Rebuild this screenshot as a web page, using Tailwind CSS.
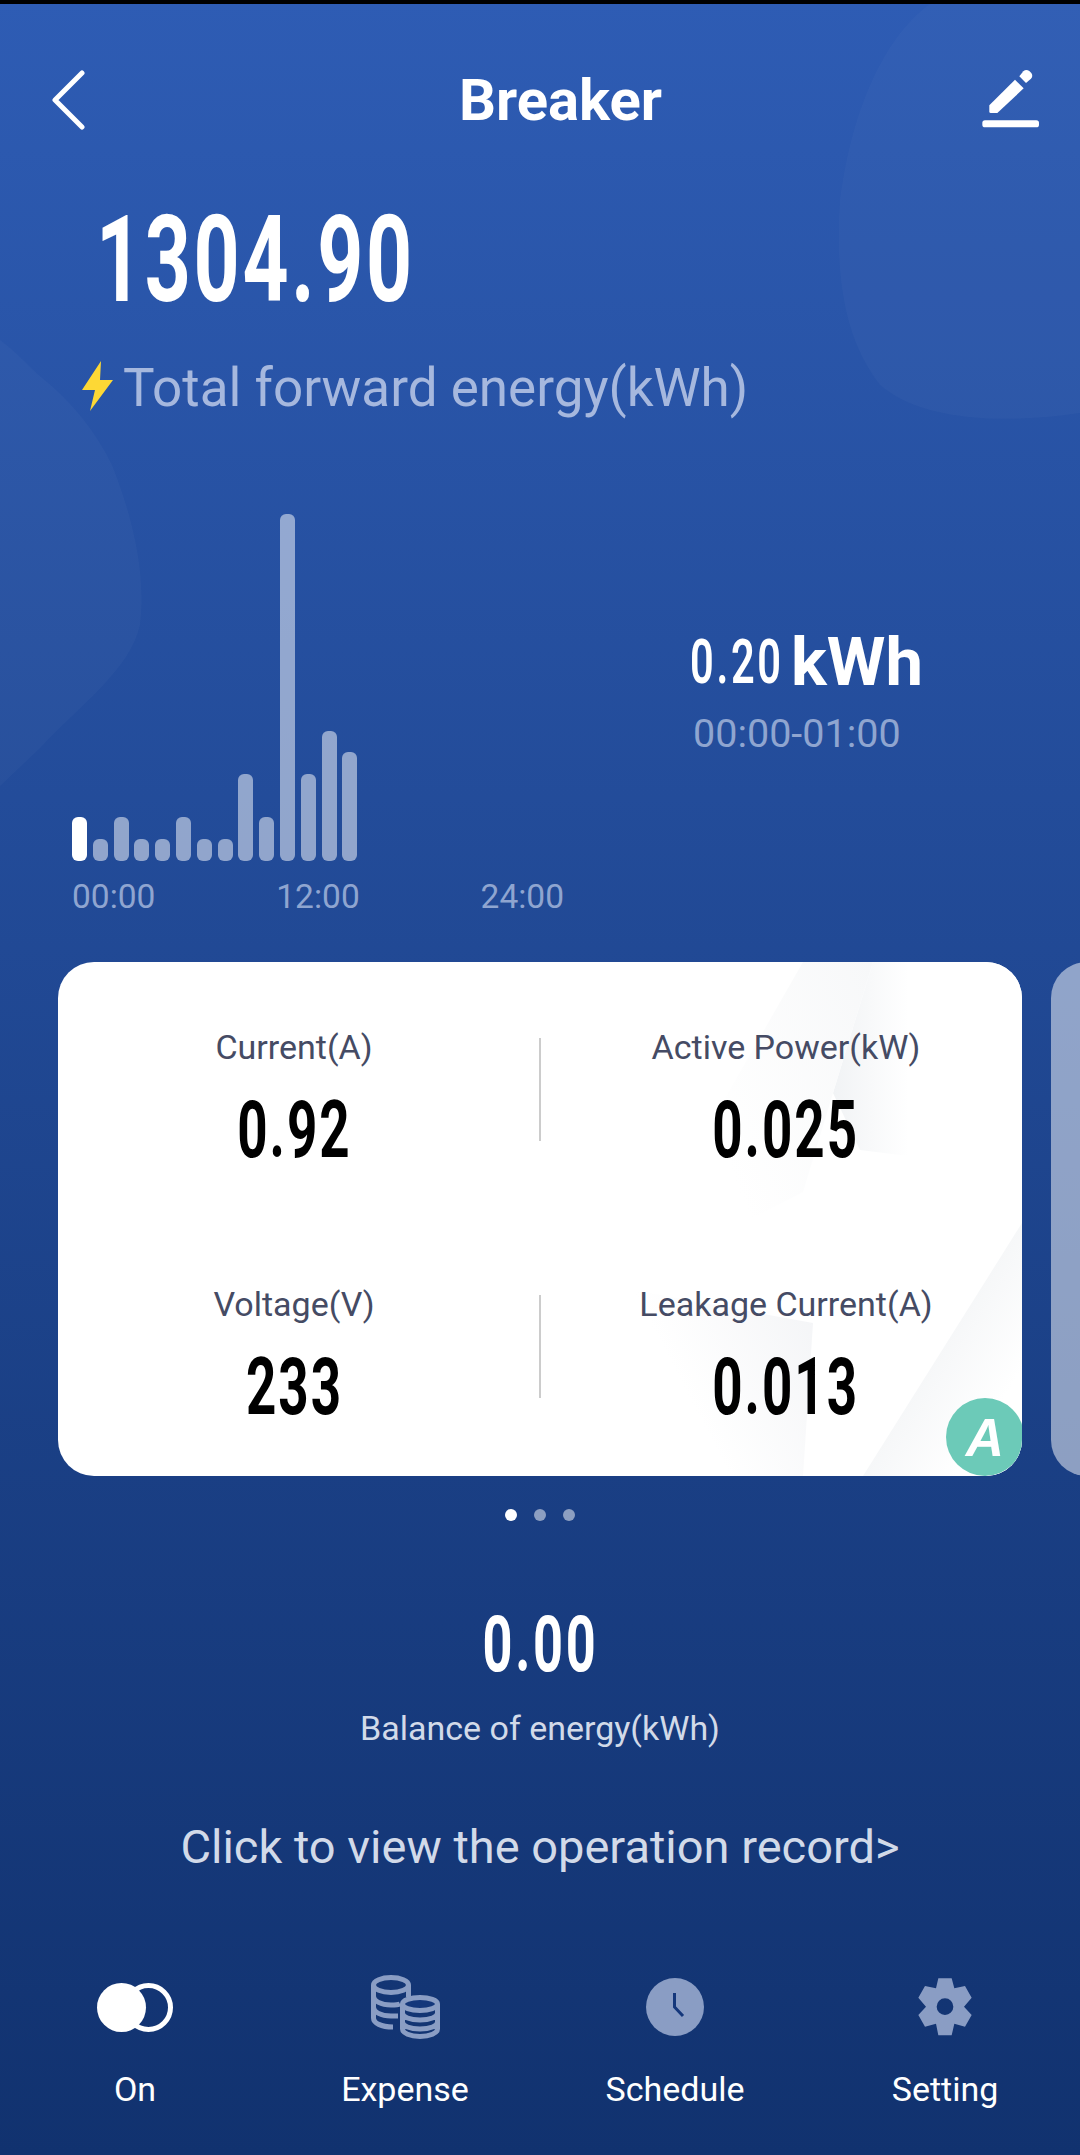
<!DOCTYPE html>
<html lang="en">
<head>
  <meta charset="UTF-8">
  <title>Breaker</title>
  <script src="https://cdn.jsdelivr.net/npm/@tailwindcss/browser@4"></script>
</head>
<body class="bg-black">
  <div class="relative w-[1080px] h-[2155px] overflow-hidden flex flex-col bg-linear-to-b from-[#2e5cb4] to-[#11326f] font-['Roboto',sans-serif] text-white">

    <!-- background blobs -->
    <svg class="absolute left-0 top-0 pointer-events-none" width="1080" height="800" viewBox="0 0 1080 800" fill="#ffffff" fill-opacity="0.022">
      <path d="M930 4 C880 40 850 120 840 200 C835 280 845 340 880 385 C920 420 1000 425 1080 413 L1080 4 Z"/>
      <path d="M0 340 C20 355 30 368 41 377 C70 400 95 430 112 465 C130 510 147 570 140 625 C130 670 80 705 40 748 L0 786 Z"/>
    </svg>

    <!-- status line -->
    <div class="relative h-[4px] bg-black shrink-0"></div>

    <!-- header -->
    <header class="relative h-[192px] shrink-0 flex items-center pl-[51px] pr-[38px]">
      <svg width="34" height="60" viewBox="0 0 34 60" fill="none" stroke="#fff" stroke-width="5" stroke-linecap="round" stroke-linejoin="round"><path d="M31 3 L4 30 L31 57"/></svg>
      <h1 class="ml-[374px] text-[58px] font-bold leading-none">Breaker</h1>
      <svg class="ml-auto" width="61.67" height="66.67" viewBox="60 50 185 200" fill="#fff">
        <path d="M88 165 L165 88 L191 114 L112 188 L92 188 Q88 188 88 184 Z"/>
        <path d="M178 78 L190 63 Q198 56 208 62 L214 68 Q220 78 213 85 L198 98 Z"/>
        <rect x="67" y="210" width="170" height="21" rx="8"/>
      </svg>
    </header>

    <!-- total -->
    <div class="relative h-[128px] shrink-0 flex items-center pl-[96px]">
      <span class="inline-block origin-left scale-x-[0.67] text-[120px] font-bold tracking-[4px] leading-none">1304.90</span>
    </div>
    <div class="relative h-[128px] shrink-0 flex items-center pl-[82px] gap-[10px] text-[53px] text-[#a6b8de]">
      <svg class="mb-[4px]" width="31" height="50" viewBox="0 0 31 50" fill="#fdd835"><path d="M19 0 L0 29 L13 29 L8 50 L31 19 L18 19 Z"/></svg>
      <span class="leading-none">Total forward energy(kWh)</span>
    </div>

    <!-- chart -->
    <section class="relative h-[510px] shrink-0 flex">
      <div class="w-[640px] pl-[72px] flex flex-col">
        <div class="h-[409px] flex items-end gap-[5.8px]">
          <div class="w-[15px] h-[44px] rounded-[6px] bg-white"></div>
          <div class="w-[15px] h-[22px] rounded-[6px] bg-white/50"></div>
          <div class="w-[15px] h-[44px] rounded-[6px] bg-white/50"></div>
          <div class="w-[15px] h-[22px] rounded-[6px] bg-white/50"></div>
          <div class="w-[15px] h-[22px] rounded-[6px] bg-white/50"></div>
          <div class="w-[15px] h-[44px] rounded-[6px] bg-white/50"></div>
          <div class="w-[15px] h-[22px] rounded-[6px] bg-white/50"></div>
          <div class="w-[15px] h-[22px] rounded-[6px] bg-white/50"></div>
          <div class="w-[15px] h-[87px] rounded-[6px] bg-white/50"></div>
          <div class="w-[15px] h-[44px] rounded-[6px] bg-white/50"></div>
          <div class="w-[15px] h-[347px] rounded-[6px] bg-white/50"></div>
          <div class="w-[15px] h-[87px] rounded-[6px] bg-white/50"></div>
          <div class="w-[15px] h-[130px] rounded-[6px] bg-white/50"></div>
          <div class="w-[15px] h-[109px] rounded-[6px] bg-white/50"></div>
        </div>
        <div class="w-[492px] flex justify-between mt-[18px] text-[33.5px] leading-[36px] text-[#8fa5d0]">
          <span>00:00</span><span>12:00</span><span>24:00</span>
        </div>
      </div>
      <div class="pl-[50px] pt-[180px]">
        <div class="flex items-center h-[60px]">
          <span class="inline-block w-[92px] origin-left scale-x-[0.67] text-[62px] font-semibold tracking-[4px] leading-none">0.20</span>
          <span class="ml-[9px] text-[67px] font-bold leading-none">kWh</span>
        </div>
        <div class="mt-[22px] ml-[3px] text-[39.5px] leading-none text-[#8fa5d0]">00:00-01:00</div>
      </div>
    </section>

    <!-- cards -->
    <section class="relative h-[514px] shrink-0 flex pl-[58px] gap-[29px]">
      <div class="relative w-[964px] h-full shrink-0 rounded-[36px] overflow-hidden bg-white text-[#454b64]">
        <svg class="absolute inset-0" width="964" height="514" viewBox="0 0 964 514">
          <defs>
            <linearGradient id="fadeA" x1="0" y1="0" x2="1" y2="0">
              <stop offset="0" stop-color="#f1f3f5"/><stop offset="0.4" stop-color="#ffffff"/>
            </linearGradient>
            <linearGradient id="fadeB" x1="1" y1="0.1" x2="0" y2="0.6">
              <stop offset="0" stop-color="#f4f5f7"/><stop offset="0.7" stop-color="#ffffff"/>
            </linearGradient>
            <linearGradient id="fadeC" x1="0.3" y1="0.3" x2="1" y2="1">
              <stop offset="0" stop-color="#f0f2f4"/><stop offset="0.7" stop-color="#ffffff"/>
            </linearGradient>
            <linearGradient id="fadeD" x1="1" y1="0" x2="0" y2="0.5">
              <stop offset="0" stop-color="#f7f8f9"/><stop offset="0.7" stop-color="#ffffff"/>
            </linearGradient>
          </defs>
          <path d="M815 0 L775 131 L802 188 L964 208 L964 0 Z" fill="url(#fadeA)"/>
          <path d="M745 0 L815 0 L775 131 L745 230 L559 325 Z" fill="url(#fadeD)"/>
          <path d="M559 325 L755 361 L745 514 L600 514 Z" fill="url(#fadeB)"/>
          <path d="M805 514 L964 261 L964 514 Z" fill="url(#fadeC)"/>
        </svg>
        <div class="relative grid grid-cols-2 gap-x-[20px]">
          <div class="h-[257px] pt-[65px] flex flex-col items-center">
            <div class="text-[34px] leading-[40px]">Current(A)</div>
            <div class="mt-[21px] scale-x-[0.67] text-[79px] font-bold tracking-[3px] leading-[84px] text-black">0.92</div>
          </div>
          <div class="relative h-[257px] pt-[65px] flex flex-col items-center">
            <div class="absolute left-[-11px] top-[76px] w-[2px] h-[103px] bg-[#cccccc]"></div>
            <div class="text-[34px] leading-[40px]">Active Power(kW)</div>
            <div class="mt-[21px] scale-x-[0.67] text-[79px] font-bold tracking-[3px] leading-[84px] text-black">0.025</div>
          </div>
          <div class="h-[257px] pt-[65px] flex flex-col items-center">
            <div class="text-[34px] leading-[40px]">Voltage(V)</div>
            <div class="mt-[21px] scale-x-[0.67] text-[79px] font-bold tracking-[3px] leading-[84px] text-black">233</div>
          </div>
          <div class="relative h-[257px] pt-[65px] flex flex-col items-center">
            <div class="absolute left-[-11px] top-[76px] w-[2px] h-[103px] bg-[#cccccc]"></div>
            <div class="text-[34px] leading-[40px]">Leakage Current(A)</div>
            <div class="mt-[21px] scale-x-[0.67] text-[79px] font-bold tracking-[3px] leading-[84px] text-black">0.013</div>
          </div>
        </div>
        <div class="absolute left-[888px] top-[436px] w-[78px] h-[78px] rounded-full bg-[#6ccab8] flex items-center justify-center text-[53px] font-bold italic leading-none text-white font-['Liberation_Sans',sans-serif]">A</div>
      </div>
      <div class="w-[100px] h-full shrink-0 rounded-[36px] bg-white/50"></div>
    </section>

    <!-- pager dots -->
    <div class="relative h-[78px] shrink-0 flex items-center justify-center gap-[17px]">
      <div class="w-[12px] h-[12px] rounded-full bg-white"></div>
      <div class="w-[12px] h-[12px] rounded-full bg-white/50"></div>
      <div class="w-[12px] h-[12px] rounded-full bg-white/50"></div>
    </div>

    <!-- balance -->
    <div class="relative flex flex-col items-center">
      <div class="mt-[46px] scale-x-[0.67] text-[78px] font-bold tracking-[4px] leading-[90px]">0.00</div>
      <div class="mt-[18px] text-[34px] leading-[40px] text-[#d2dae9]">Balance of energy(kWh)</div>
      <div class="mt-[72px] text-[47px] leading-[54px] text-[#d2dae9]">Click to view the operation record&gt;</div>
    </div>

    <!-- bottom nav -->
    <nav class="absolute left-0 bottom-0 w-full h-[180px] grid grid-cols-4 text-[34px]">
      <div class="flex flex-col items-center">
        <div class="h-[64px] flex items-center">
          <svg width="76" height="49" viewBox="0 0 76 49"><circle cx="24.5" cy="24.5" r="24.5" fill="#fff"/><circle cx="51.5" cy="24.5" r="22" fill="none" stroke="#fff" stroke-width="5"/></svg>
        </div>
        <span class="mt-[30px] leading-[40px]">On</span>
      </div>
      <div class="flex flex-col items-center">
        <div class="h-[64px] flex items-center">
          <svg width="69" height="64" viewBox="0 0 69 64" fill="none" stroke="#8a9dc4" stroke-width="5">
            <ellipse cx="20" cy="10" rx="17.5" ry="7.5"/>
            <path d="M2.5 10 V43 C2.5 48 10 52 22 52 M37.5 10 V22 M2.5 21 C2.5 26 10 30 20 30 C24 30 27 30 29 29 M2.5 32 C2.5 37 10 41 20 41 L27 41"/>
            <ellipse cx="49" cy="29" rx="17.5" ry="6.5" fill="#14377b"/>
            <path d="M31.5 29 V54 C31.5 58 39 61.5 49 61.5 C59 61.5 66.5 58 66.5 54 V29 M31.5 38 C31.5 42 39 45 49 45 C59 45 66.5 42 66.5 38 M31.5 47 C31.5 51 39 54 49 54 C59 54 66.5 51 66.5 47"/>
          </svg>
        </div>
        <span class="mt-[30px] leading-[40px]">Expense</span>
      </div>
      <div class="flex flex-col items-center">
        <div class="h-[64px] flex items-center">
          <svg width="58" height="58" viewBox="0 0 58 58"><circle cx="29" cy="29" r="29" fill="#8a9dc4"/><path d="M28.5 15 V29 L37 38" fill="none" stroke="#14377b" stroke-width="3"/></svg>
        </div>
        <span class="mt-[30px] leading-[40px]">Schedule</span>
      </div>
      <div class="flex flex-col items-center">
        <div class="h-[64px] flex items-center">
          <svg width="60" height="61.67" viewBox="45 35 180 185" fill="#8a9dc4" fill-rule="evenodd">
            <path d="M115 42 L155 42 L163 72 L195 65 L215 100 L192 127 L215 152 L195 187 L163 178 L155 213 L115 213 L108 178 L75 187 L55 152 L78 127 L55 100 L75 65 L108 72 Z M160 127 A25 25 0 1 0 110 127 A25 25 0 1 0 160 127 Z"/>
          </svg>
        </div>
        <span class="mt-[30px] leading-[40px]">Setting</span>
      </div>
    </nav>
  </div>
</body>
</html>
